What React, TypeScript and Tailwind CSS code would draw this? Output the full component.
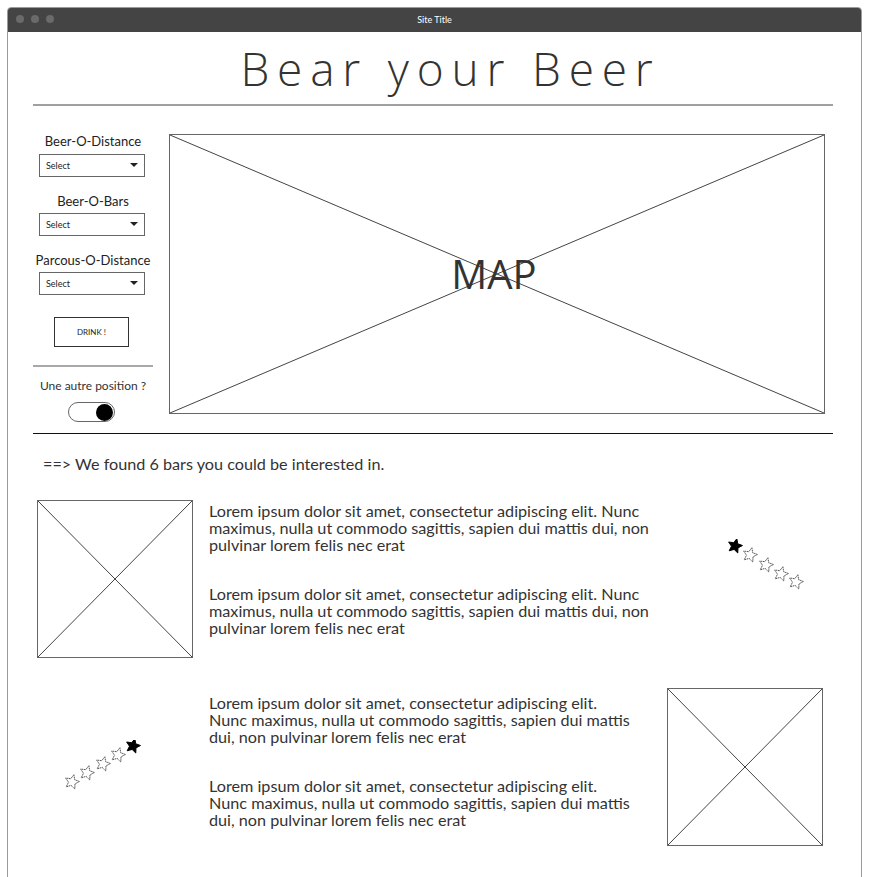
const lorem = [
  "Lorem ipsum dolor sit amet, consectetur adipiscing elit. Nunc",
  "maximus, nulla ut commodo sagittis, sapien dui mattis dui, non",
  "pulvinar lorem felis nec erat",
];
const loremNarrow = [
  "Lorem ipsum dolor sit amet, consectetur adipiscing elit.",
  "Nunc maximus, nulla ut commodo sagittis, sapien dui mattis",
  "dui, non pulvinar lorem felis nec erat",
];

function Cross({ className }: { className: string }) {
  return (
    <div className={"relative border border-[#666] bg-white " + className}>
      <svg className="absolute inset-0 h-full w-full" viewBox="0 0 100 100" preserveAspectRatio="none">
        <line x1="0" y1="0" x2="100" y2="100" stroke="#444" strokeWidth="1" vectorEffect="non-scaling-stroke" />
        <line x1="100" y1="0" x2="0" y2="100" stroke="#444" strokeWidth="1" vectorEffect="non-scaling-stroke" />
      </svg>
    </div>
  );
}

function starPoints(cx: number, cy: number, r: number) {
  const pts: string[] = [];
  for (let i = 0; i < 10; i++) {
    const rad = i % 2 === 0 ? r : r * 0.47;
    const a = -Math.PI / 2 + (i * Math.PI) / 5 + 0.25;
    pts.push(`${(cx + rad * Math.cos(a)).toFixed(2)},${(cy + rad * Math.sin(a)).toFixed(2)}`);
  }
  return pts.join(" ");
}

// stars go down-right (first filled) or up-right (last filled)
function Stars({ rising }: { rising?: boolean }) {
  const xs = [8, 23, 39, 54, 69];
  const ys = rising ? [42, 33, 24, 15, 6] : [7, 16, 26, 35, 43];
  return (
    <svg width="80" height="52" viewBox="0 0 80 52">
      {xs.map((x, i) => {
        const filled = rising ? i === 4 : i === 0;
        return (
          <polygon
            key={i}
            points={starPoints(x, ys[i], 7.5)}
            fill={filled ? "#000" : "#fff"}
            stroke={filled ? "#000" : "#555"}
            strokeWidth={1}
            strokeDasharray={filled ? undefined : "1.6 0.6"}
          />
        );
      })}
    </svg>
  );
}

function Select() {
  return (
    <div className="ml-[6px] flex h-[23px] w-[106px] items-center justify-between border border-[#666] bg-white pl-[6px] pr-[6px]">
      <span className="text-[9px] text-[#222]">Select</span>
      <svg width="8" height="5" viewBox="0 0 8 5">
        <polygon points="0,0 8,0 4,4" fill="#222" />
      </svg>
    </div>
  );
}

function Para({ lines }: { lines: string[] }) {
  return (
    <p className="text-[16.2px] leading-[17px] text-[#333]">
      {lines.map((l) => (
        <span key={l} className="block whitespace-nowrap">{l}</span>
      ))}
    </p>
  );
}

export default function App() {
  return (
    <div className="h-[877px] w-[870px] overflow-hidden bg-white pl-[7px] pt-[7px] font-['Lato',sans-serif]">
      <div className="flex h-[880px] w-[855px] flex-col overflow-hidden rounded-t-[4px] border border-[#9a9a9a]">
        <div className="relative flex h-[24px] items-center justify-center bg-[#444]">
          <div className="absolute left-[8px] top-[7px] flex gap-[7px]">
            <span className="h-[8px] w-[8px] rounded-full bg-[#6a6a6a]" />
            <span className="h-[8px] w-[8px] rounded-full bg-[#6a6a6a]" />
            <span className="h-[8px] w-[8px] rounded-full bg-[#6a6a6a]" />
          </div>
          <span className="text-[9px] text-white">Site Title</span>
        </div>

        <div className="w-[826px] pl-[25px]">
          <h1 className="pt-[8px] pl-[34px] text-center font-['Open_Sans',sans-serif] text-[46px] font-light leading-[56px] tracking-[0.17em] text-[#333]">
            Bear your Beer
          </h1>
          <div className="mt-[8px] h-[2px] w-[800px] bg-[#a0a0a0]" />

          <div className="mt-[28px] flex h-[280px] w-[800px] items-start">
            <div className="flex w-[120px] flex-col">
              <span className="-mt-px text-center text-[13px] leading-[16px] text-[#222]">Beer-O-Distance</span>
              <div className="mt-[5px]"><Select /></div>
              <span className="mt-[16px] text-center text-[13px] leading-[16px] text-[#222]">Beer-O-Bars</span>
              <div className="mt-[4px]"><Select /></div>
              <span className="mt-[16px] text-center text-[13px] leading-[16px] text-[#222]">Parcous-O-Distance</span>
              <div className="mt-[4px]"><Select /></div>
              <div className="mt-[22px] ml-[21px] flex h-[30px] w-[75px] items-center justify-center border border-[#333]">
                <span className="text-[8px] text-[#222]">DRINK !</span>
              </div>
              <div className="mt-[18px] h-[2px] w-[120px] bg-[#a8a8a8]" />
              <span className="mt-[11px] text-center text-[12px] leading-[16px] text-[#333]">Une autre position ?</span>
              <div className="mt-[8px] ml-[35px] flex h-[20px] w-[47px] items-center justify-end rounded-full border border-[#666] bg-white pr-[1px]">
                <span className="h-[17px] w-[17px] rounded-full bg-black" />
              </div>
            </div>
            <div className="ml-[16px] relative flex h-[280px] w-[656px] items-center justify-center border border-[#666]">
              <svg className="absolute inset-0 h-full w-full" viewBox="0 0 100 100" preserveAspectRatio="none">
                <line x1="0" y1="0" x2="100" y2="100" stroke="#444" strokeWidth="1" vectorEffect="non-scaling-stroke" />
                <line x1="100" y1="0" x2="0" y2="100" stroke="#444" strokeWidth="1" vectorEffect="non-scaling-stroke" />
              </svg>
              <span className="relative -ml-[6px] font-['Open_Sans',sans-serif] text-[40px] leading-none text-[#333]">MAP</span>
            </div>
          </div>

          <div className="mt-[19px] h-px w-[800px] bg-[#111]" />
          <p className="mt-[20px] pl-[10px] text-[16.2px] leading-[20px] text-[#333]">
            ==&gt; We found 6 bars you could be interested in.
          </p>

          <div className="mt-[26px] flex w-[800px] items-start">
            <Cross className="ml-[4px] h-[158px] w-[156px] shrink-0" />
            <div className="ml-[16px] mt-[2px] flex w-[470px] flex-col gap-[32px]">
              <Para lines={lorem} />
              <Para lines={lorem} />
            </div>
            <div className="ml-[48px] mt-[39px]">
              <Stars />
            </div>
          </div>

          <div className="mt-[30px] flex w-[800px] items-start">
            <div className="ml-[31px] mt-[52px] w-[80px]">
              <Stars rising />
            </div>
            <div className="ml-[65px] mt-[6px] flex w-[458px] flex-col gap-[32px]">
              <Para lines={loremNarrow} />
              <Para lines={loremNarrow} />
            </div>
            <Cross className="h-[158px] w-[156px] shrink-0" />
          </div>
        </div>
      </div>
    </div>
  );
}
